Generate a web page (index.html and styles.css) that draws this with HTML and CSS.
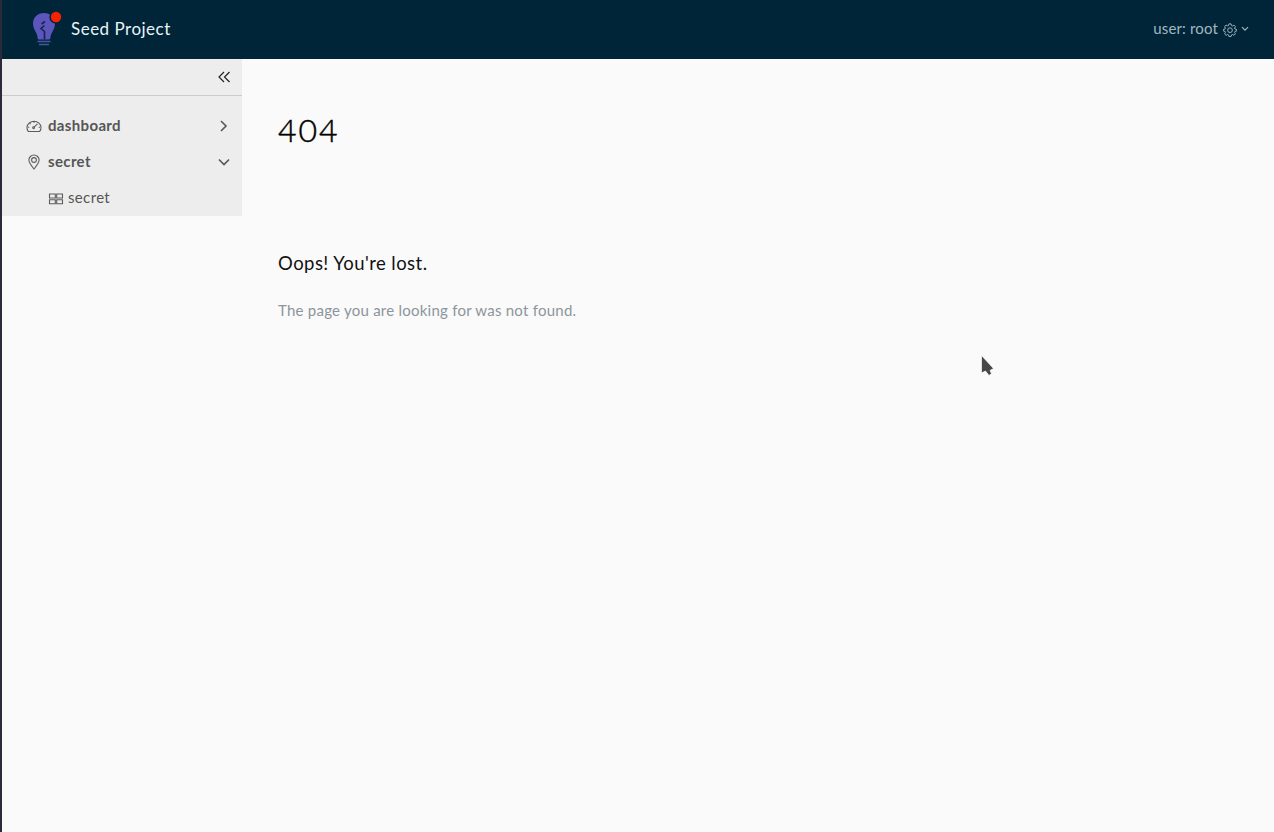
FILE: index.html
```html
<!DOCTYPE html>
<html lang="en">
<head>
<meta charset="utf-8">
<title>Seed Project</title>
<link rel="stylesheet" href="styles.css">
</head>
<body>
<div class="app">
  <header class="header">
    <a class="brand">
      <svg class="logo" viewBox="0 0 32 36">
        <path class="bulb" d="M12 3C5.500 3 1 7.500 1 13.500C1 18 3 20.500 4.500 23.500C6 26.500 5 29.500 7 29.500H17C19 29.500 18 26.500 19.500 23.500C21 20.500 23 18 23 13.500C23 7.500 18 3 12 3Z"/>
        <path class="branch" d="M12.500 29.500V21.500L9 18.500L12.500 15.500M9.500 14L13 11.500"/>
        <path class="base" d="M5.500 31.500H18.500M7 34.500H17"/>
        <circle class="dot-ring" cx="24" cy="7" r="6.700"/>
        <circle class="dot" cx="24" cy="7" r="5.200"/>
      </svg>
      <span class="title">Seed Project</span>
    </a>
    <div class="user">
      <span class="user-name">user: root</span>
      <svg class="gear" viewBox="0 0 16 16"><path d="M6.800 1h2.400l.5 1.900 1.100.5 1.700-1 1.700 1.700-1 1.700.5 1.100 1.900.5v1.700l-1.900.5-.5 1.100 1 1.700-1.700 1.700-1.700-1-1.100.5-.5 1.900H6.800l-.5-1.900-1.100-.5-1.700 1-1.700-1.700 1-1.700-.5-1.100-1.900-.5V7.400l1.900-.5.5-1.100-1-1.700 1.700-1.700 1.700 1 1.100-.5z"/><circle cx="8" cy="8.200" r="2.700"/></svg>
      <svg class="caret" viewBox="0 0 8 6"><path d="M1 1.200L4 4.200L7 1.200"/></svg>
    </div>
  </header>
  <div class="body">
    <nav class="sidebar">
      <div class="collapse"><svg class="chevron dark" viewBox="0 0 14 14"><path d="M7 2L2 7L7 12M12.500 2L7.500 7L12.500 12"/></svg></div>
      <div class="menu">
        <div class="item">
          <svg class="icon" viewBox="0 0 16 16"><path d="M2.300 13.500A7 6.500 0 1 1 13.700 13.500ZM7.800 9.300L11.500 5.800M8 3.500V4.800M2 9.300H3.300M12.700 9.300H14M3.700 5.200L4.600 6.100"/><circle cx="7.600" cy="9.700" r=".9"/></svg>
          <span class="label">dashboard</span>
          <svg class="chevron" viewBox="0 0 14 14"><path d="M4 2L9 7L4 12"/></svg>
        </div>
        <div class="item">
          <svg class="icon" viewBox="0 0 16 16"><path d="M8 15C6 12.500 2.900 9 2.900 6.100A5.100 5.100 0 0 1 13.100 6.100C13.100 9 10 12.500 8 15Z"/><circle cx="8" cy="6" r="2.400"/></svg>
          <span class="label">secret</span>
          <svg class="chevron" viewBox="0 0 14 14"><path d="M2 4.500L7 9.500L12 4.500"/></svg>
        </div>
        <div class="item child">
          <svg class="icon" viewBox="0 0 16 16"><path d="M1.500 4H7.300V8H1.500ZM8.700 4H14.500V8H8.700ZM1.500 9.700H7.300V13.700H1.500ZM8.700 9.700H14.500V13.700H8.700Z"/></svg>
          <span class="label">secret</span>
        </div>
      </div>
    </nav>
    <main class="content">
      <h1 class="code">404</h1>
      <h2 class="lost">Oops! You're lost.</h2>
      <p class="message">The page you are looking for was not found.</p>
    </main>
  </div>
</div>
<svg class="cursor" viewBox="0 0 16 24"><path d="M2.500 1.500V19L6.500 17L10 21.500L12.500 19.500L11 16.500L14.500 14.500Z"/></svg>
</body>
</html>
```
FILE: styles.css
```css
* { box-sizing: border-box; }
body {
  margin: 0;
  background: #fafafa;
  font-family: Lato, "Open Sans", sans-serif;
  font-size: 14px;
}
svg { display: block; flex: none; fill: none; }
.app { min-height: 832px; border-left: 2px solid #292a3a; }
.header {
  height: 59px;
  padding: 0 25px 0 30px;
  display: flex;
  align-items: center;
  justify-content: space-between;
  background: #002538;
}
.brand { display: flex; align-items: center; gap: 7px; }
.logo { width: 32px; height: 36px; margin-top: -4px; }
.bulb { fill: #5b55bc; }
.branch { stroke: #15264e; stroke-width: 1.6; }
.base { stroke: #4657a0; stroke-width: 1.4; }
.dot-ring { fill: #002538; }
.dot { fill: #f52300; }
.title { color: #e9f3f7; font-size: 17px; line-height: 24px; letter-spacing: .5px; margin-top: -2px; }
.user { display: flex; align-items: center; color: #a3b7c1; }
.user-name { font-size: 15px; letter-spacing: .15px; margin-top: -3px; }
.gear { width: 14px; height: 14px; margin: 1px 4px 0 5px; stroke: #a3b7c1; stroke-width: 1.1; }
.caret { width: 8px; height: 6px; margin-top: -1px; stroke: #a3b7c1; stroke-width: 1.2; }
.body { display: flex; align-items: flex-start; }
.sidebar { width: 240px; height: 157px; background: #ededed; color: #565656; }
.collapse { height: 37px; border-bottom: 1px solid #ccc; display: flex; align-items: center; justify-content: flex-end; padding-right: 11px; }
.chevron { width: 14px; height: 14px; stroke: #565656; stroke-width: 1.6; }
.dark { stroke: #222; stroke-width: 1.2; }
.menu { padding-top: 12px; }
.item { height: 36px; display: flex; align-items: center; padding: 0 11px 0 24px; font-weight: 700; font-size: 15px; }
.icon { width: 16px; height: 16px; margin-right: 6px; stroke: #5c5c5c; stroke-width: 1.1; }
.label { flex: 1; letter-spacing: .35px; margin-top: -2px; }
.child { padding-left: 46px; font-weight: 400; }
.child .icon { margin-right: 4px; }
.content { padding: 47px 36px; }
.code { margin: 0; font-size: 32px; font-weight: 300; line-height: 48px; letter-spacing: 2px; color: #000; -webkit-text-stroke: .5px #000; }
.lost { margin: 97px 0 0; font-size: 18.500px; font-weight: 400; line-height: 24px; letter-spacing: .45px; color: #111; }
.message { margin: 23px 0 0; font-size: 15px; line-height: 24px; letter-spacing: .24px; color: #8c959b; }
.cursor { position: absolute; left: 979px; top: 354px; width: 16px; height: 24px; fill: #474747; stroke: #fff; stroke-width: .7; }
```
